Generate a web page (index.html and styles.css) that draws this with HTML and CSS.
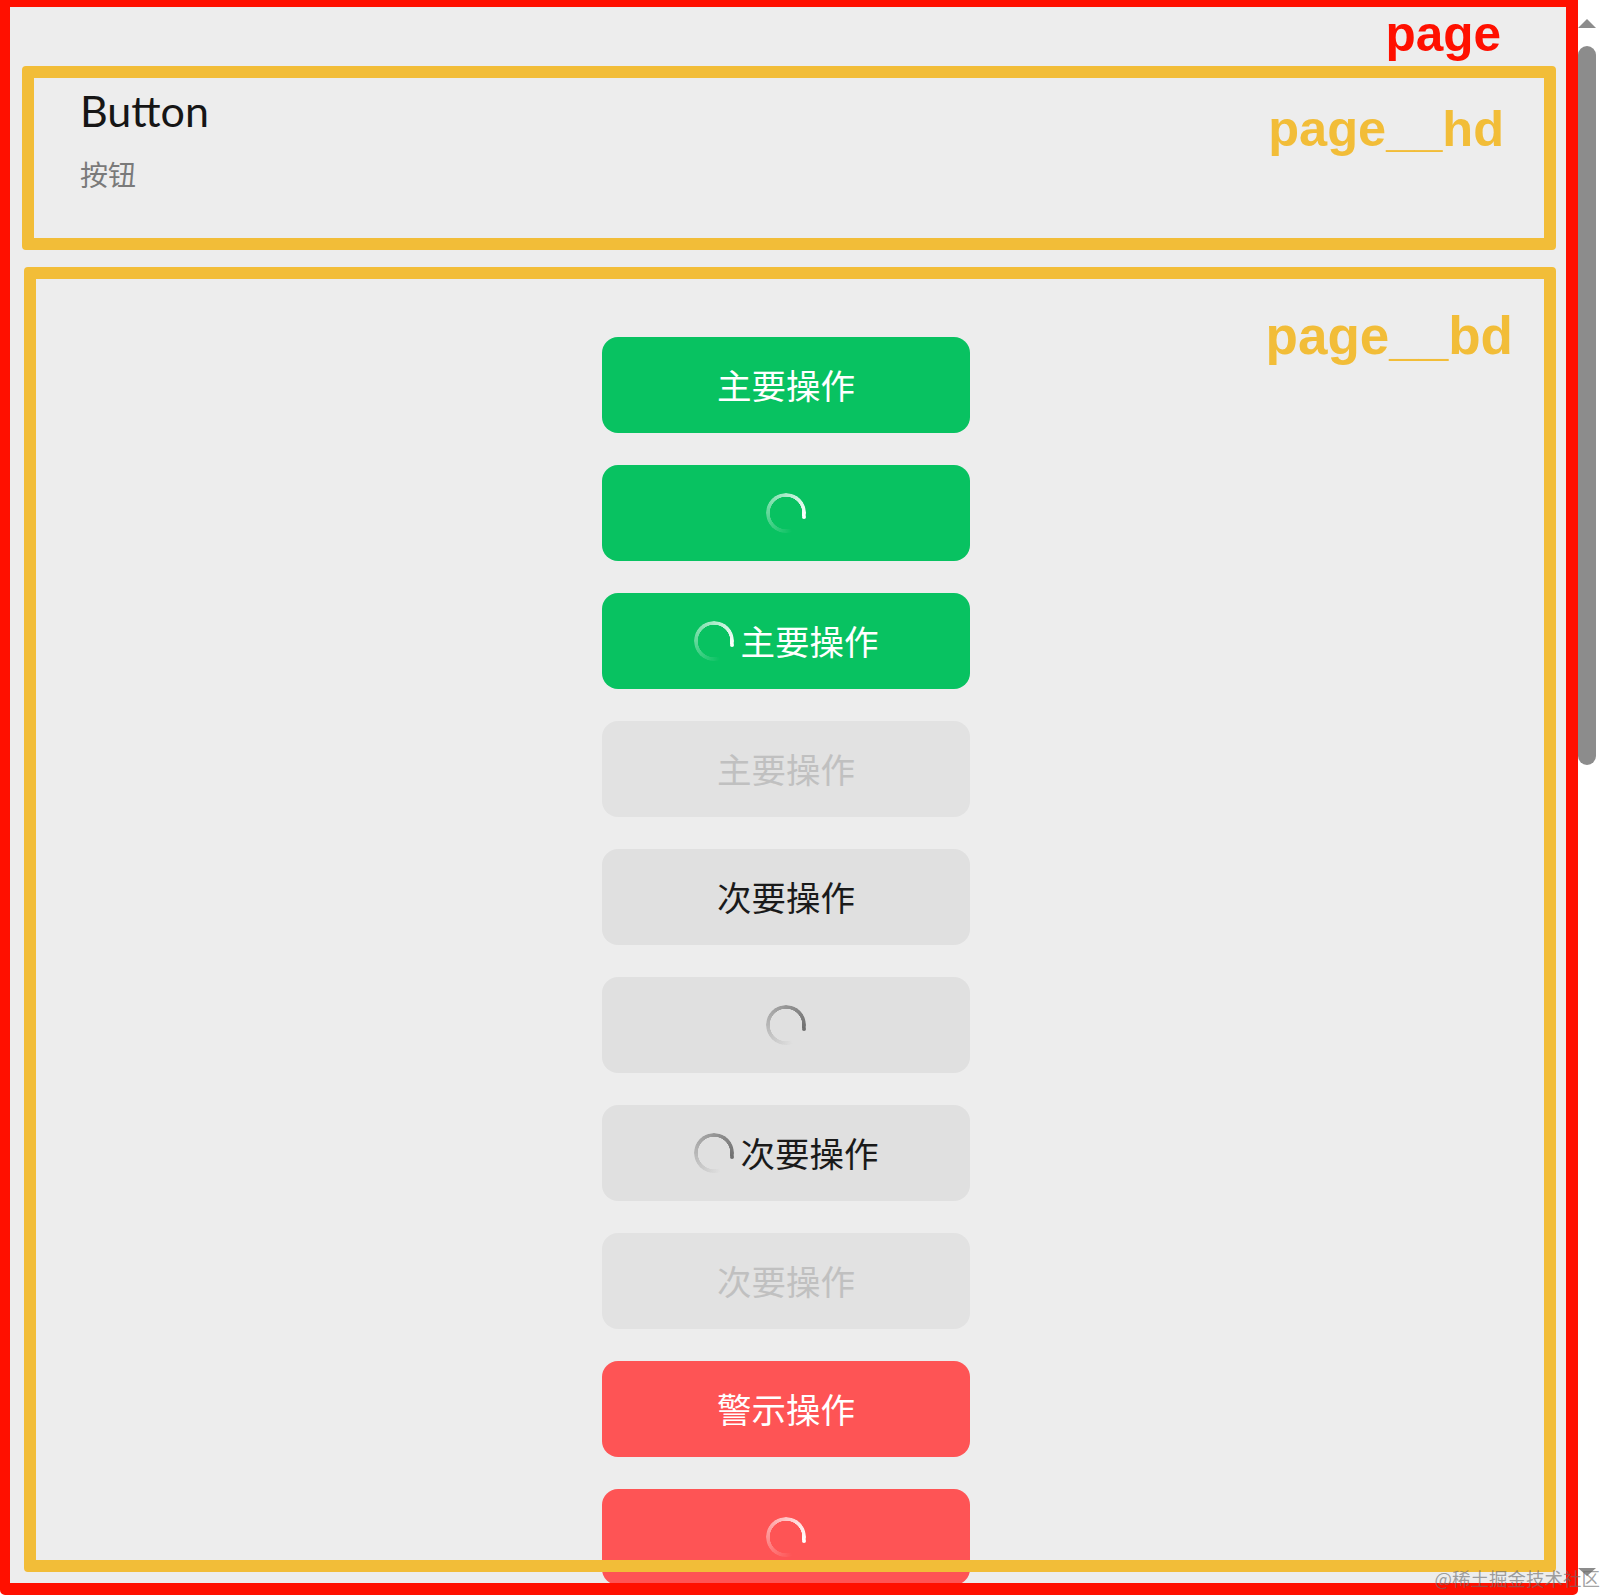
FILE: index.html
```html
<!DOCTYPE html>
<html lang="zh-CN">
<head>
  <meta charset="UTF-8">
  <title>Button</title>
  <link rel="stylesheet" href="styles.css">
</head>
<body>

<!-- page frame, red -->
<div class="page">
  <span class="tag tag-page">page</span>

  <div class="page__hd">
    <span class="tag tag-hd">page__hd</span>
    <h1 class="page__title">Button</h1>
    <p class="page__desc">按钮</p>
  </div>

  <div class="page__bd">
    <span class="tag tag-bd">page__bd</span>
    <div class="btn-list">
      <div class="btn btn-primary">主要操作</div>
      <div class="btn btn-primary"><span class="loading"></span></div>
      <div class="btn btn-primary"><span class="loading loading-text"></span>主要操作</div>
      <div class="btn btn-default btn-disabled">主要操作</div>
      <div class="btn btn-default">次要操作</div>
      <div class="btn btn-default"><span class="loading"></span></div>
      <div class="btn btn-default"><span class="loading loading-text"></span>次要操作</div>
      <div class="btn btn-default btn-disabled">次要操作</div>
      <div class="btn btn-warn">警示操作</div>
      <div class="btn btn-warn"><span class="loading"></span></div>
    </div>
  </div>
</div>

<!-- browser scrollbar -->
<div class="scrollbar">
  <div class="arrow-up"></div>
  <div class="thumb"></div>
  <div class="arrow-down"></div>
</div>

<div class="watermark">@稀土掘金技术社区</div>

</body>
</html>
```

FILE: styles.css
```css
* {
  box-sizing: border-box;
}
html, body {
  height: 100%;
}
body {
  margin: 0;
  height: 1596px;
  overflow: hidden;
  display: flex;
  background: #fff;
  font-family: "Noto Sans CJK SC", sans-serif;
  color: #1a1a1a;
}

/* page */
.page {
  position: relative;
  width: 1578px;
  height: 1595px;
  flex: none;
  padding: 59px 10px 0 12px;
  overflow: hidden;
  background: #ededed;
  border: solid #ff1000;
  border-width: 7px 12px 12px 10px;
  border-radius: 0 0 5px 5px;
}
.page__hd {
  position: relative;
  height: 184px;
  padding: 9px 46px 0;
  border: 12px solid #f2bd38;
  border-radius: 4px;
}
.page__title {
  margin: 0;
  font-family: Lato, "Noto Sans CJK SC", sans-serif;
  font-size: 43px;
  font-weight: 400;
  line-height: 48px;
  color: #161616;
}
.page__desc {
  margin: 19px 0 0;
  font-size: 28px;
  line-height: 40px;
  color: #7a7a7a;
}
.page__bd {
  position: relative;
  height: 1305px;
  margin: 17px 0 0 2px;
  padding: 70px 8px 0 0;
}
.page__bd::after {
  content: "";
  position: absolute;
  inset: 0;
  border: 12px solid #f2bd38;
  border-radius: 4px;
}

/* labels on the frames */
.tag {
  position: absolute;
  z-index: 1;
  font-family: "Liberation Sans", Arial, sans-serif;
  font-weight: 700;
  line-height: 1;
  color: #f2bd38;
}
.tag-page {
  top: 2px;
  right: 65px;
  font-size: 49.5px;
  color: #ff1000;
}
.tag-hd {
  top: 26px;
  right: 40px;
  font-size: 50.5px;
}
.tag-bd {
  top: 42px;
  right: 43px;
  font-size: 53px;
}

/* buttons */
.btn-list {
  display: flex;
  flex-direction: column;
  align-items: center;
  gap: 32px;
}
.btn {
  display: flex;
  align-items: center;
  justify-content: center;
  flex: none;
  width: 368px;
  height: 96px;
  padding-bottom: 2px;
  border-radius: 16px;
  font-size: 34.5px;
}
.btn-primary {
  background: #08c261;
  color: #fff;
}
.btn-default {
  background: #e0e0e0;
  color: #1a1a1a;
}
.btn-warn {
  background: #fe5455;
  color: #fff;
}
.btn-disabled {
  background: #e2e2e2;
  color: #c0c0c0;
}

/* spinner */
.loading {
  position: relative;
  flex: none;
  width: 40px;
  height: 40px;
  margin-top: 2px;
  border-radius: 50%;
  color: #fff;
}
.loading::before {
  content: "";
  position: absolute;
  inset: 0;
  border-radius: 50%;
  background: conic-gradient(from 100deg, transparent 60deg, currentColor 360deg);
  -webkit-mask: radial-gradient(closest-side, transparent 16px, #000 16.5px);
  mask: radial-gradient(closest-side, transparent 16px, #000 16.5px);
}
.loading::after {
  content: "";
  position: absolute;
  top: 22px;
  right: 0;
  width: 4px;
  height: 4px;
  border-radius: 50%;
  background: currentColor;
}
.loading-text {
  margin-right: 7px;
}
.btn-default .loading {
  color: #707070;
}

/* scrollbar */
.scrollbar {
  flex: none;
  width: 24px;
  height: 1596px;
  padding-top: 19px;
}
.arrow-up {
  width: 0;
  height: 0;
  margin-left: 0;
  border-left: 9px solid transparent;
  border-right: 9px solid transparent;
  border-bottom: 9px solid #8c8c8c;
}
.thumb {
  width: 18px;
  height: 719px;
  margin-top: 18px;
  border-radius: 9px;
  background: #8c8c8c;
}
.arrow-down {
  width: 0;
  height: 0;
  margin-top: 803px;
  border-left: 9px solid transparent;
  border-right: 9px solid transparent;
  border-top: 8px solid #8c8c8c;
}

/* image watermark over the corner */
.watermark {
  position: absolute;
  right: 2px;
  bottom: 6px;
  font-size: 18.5px;
  line-height: 24px;
  white-space: nowrap;
  color: rgba(110, 110, 110, 0.65);
}
```
